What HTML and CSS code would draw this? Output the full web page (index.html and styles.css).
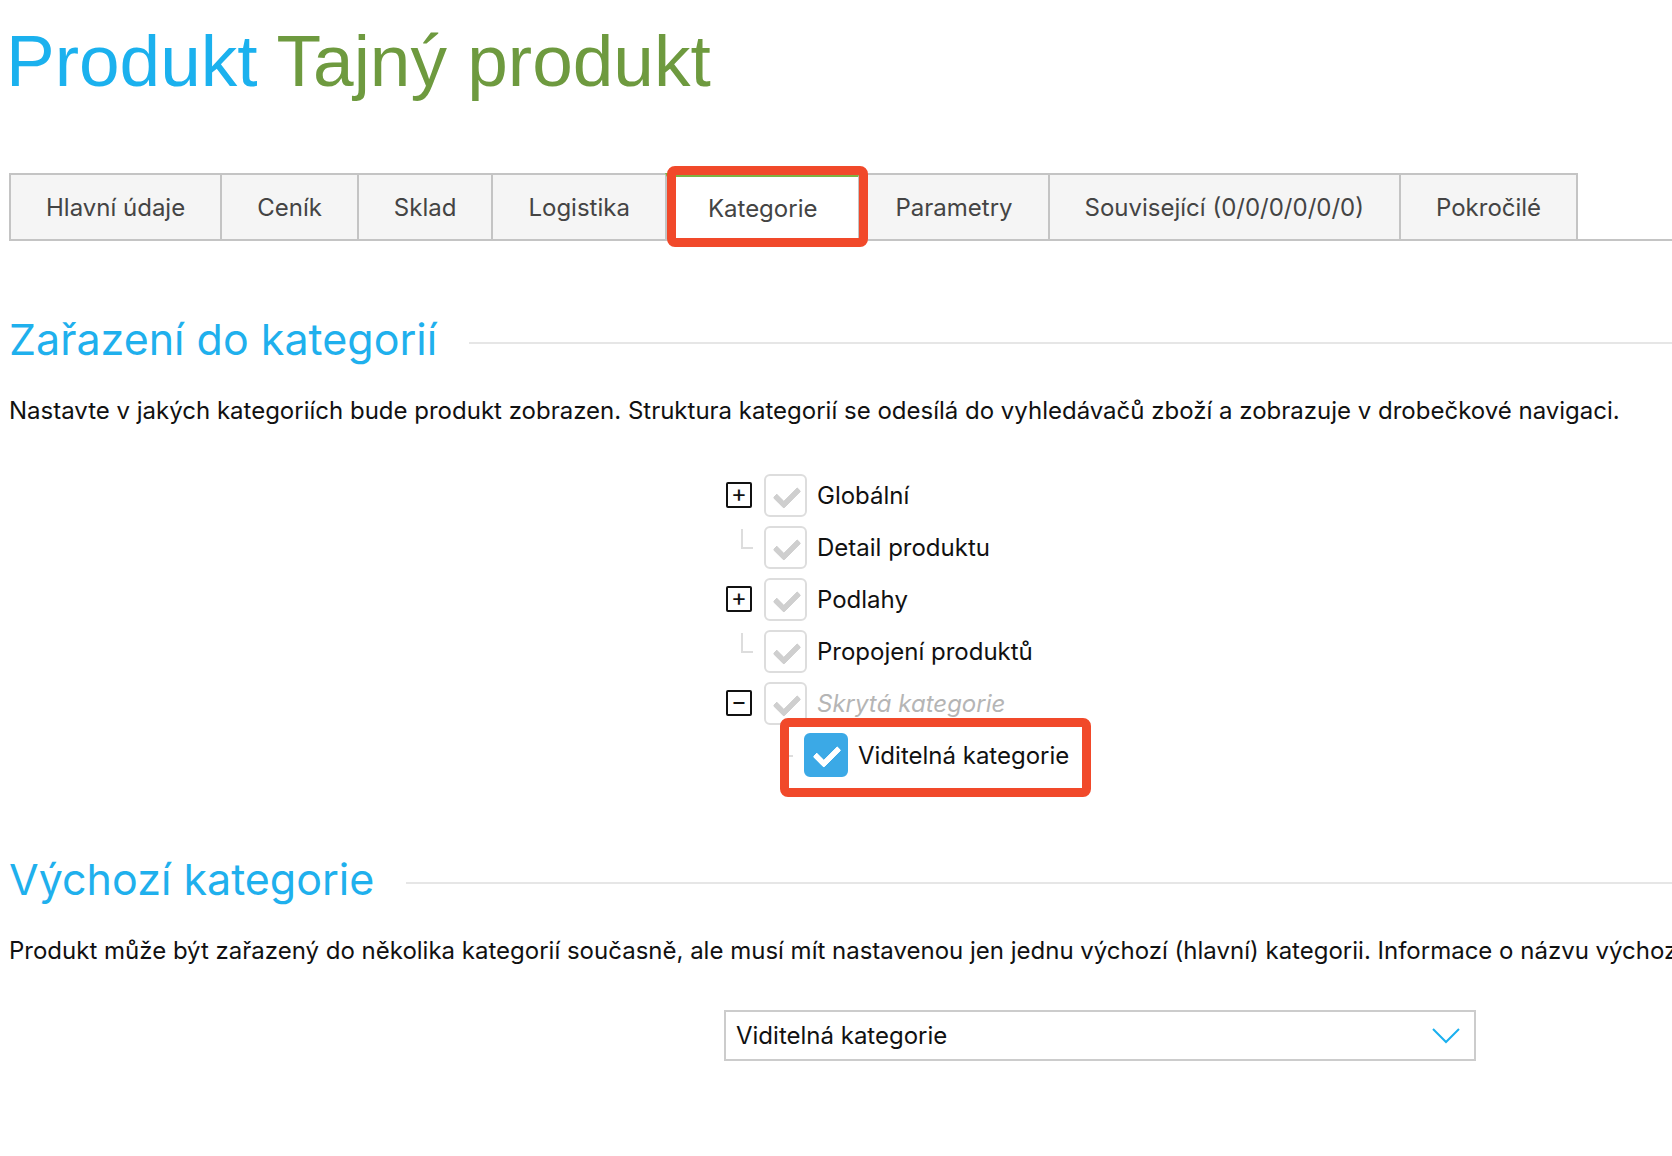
FILE: index.html
```html
<!DOCTYPE html>
<html lang="cs">
<head>
    <meta charset="UTF-8">
    <meta name="viewport" content="width=device-width, initial-scale=1.0">
    <title>Produkt Tajný produkt</title>
    <link rel="stylesheet" href="styles.css">
</head>
<body>
    <h1 class="page-title">Produkt <span class="product-name">Tajný produkt</span></h1>

    <nav class="tabs">
        <a class="tab">Hlavní údaje</a>
        <a class="tab">Ceník</a>
        <a class="tab">Sklad</a>
        <a class="tab">Logistika</a>
        <a class="tab active">Kategorie</a>
        <a class="tab">Parametry</a>
        <a class="tab">Související (0/0/0/0/0/0)</a>
        <a class="tab">Pokročilé</a>
    </nav>

    <h2 class="section-title"><span>Zařazení do kategorií</span></h2>
    <p class="hint">Nastavte v jakých kategoriích bude produkt zobrazen. Struktura kategorií se odesílá do vyhledávačů zboží a zobrazuje v drobečkové navigaci.</p>

    <div class="form-row">
        <ul class="tree">
            <li class="node">
                <span class="toggle"><span class="expander">+</span></span>
                <span class="check"></span>
                <span class="label">Globální</span>
            </li>
            <li class="node">
                <span class="toggle"><span class="branch"></span></span>
                <span class="check"></span>
                <span class="label">Detail produktu</span>
            </li>
            <li class="node">
                <span class="toggle"><span class="expander">+</span></span>
                <span class="check"></span>
                <span class="label">Podlahy</span>
            </li>
            <li class="node">
                <span class="toggle"><span class="branch"></span></span>
                <span class="check"></span>
                <span class="label">Propojení produktů</span>
            </li>
            <li class="node">
                <span class="toggle"><span class="expander">&minus;</span></span>
                <span class="check"></span>
                <span class="label hidden-cat">Skrytá kategorie</span>
            </li>
            <li class="node child">
                <span class="toggle"><span class="branch"></span></span>
                <span class="picked">
                    <span class="check checked"></span>
                    <span class="label">Viditelná kategorie</span>
                </span>
            </li>
        </ul>
    </div>

    <h2 class="section-title"><span>Výchozí kategorie</span></h2>
    <p class="hint">Produkt může být zařazený do několika kategorií současně, ale musí mít nastavenou jen jednu výchozí (hlavní) kategorii. Informace o názvu výchozí kategorie se odesílá do vyhledávačů zboží.</p>

    <div class="form-row">
        <div class="select">
            <span>Viditelná kategorie</span>
            <svg class="chevron" width="28" height="16" viewBox="0 0 28 16"><polyline points="1,1 14,14 27,1" fill="none" stroke="#1ab0ef" stroke-width="2"/></svg>
        </div>
    </div>
</body>
</html>
```

FILE: styles.css
```css
html, body {
    margin: 0;
    padding: 0;
}
body {
    width: 1672px;
    height: 1156px;
    overflow: hidden;
    padding-left: 9px;
    box-sizing: border-box;
    font-family: Inter, "Noto Sans", sans-serif;
    color: #111;
    background: #fff;
}
.page-title {
    font-family: "Liberation Sans", Arial, sans-serif;
    font-weight: normal;
    font-size: 73px;
    line-height: 84px;
    margin: 0 0 0 -3px;
    padding-top: 19px;
    color: #1bb1ee;
}
.product-name {
    color: #6e9a3f;
}

/* tabs */
.tabs {
    display: flex;
    margin-top: 70px;
    border-bottom: 2px solid #c4c4c4;
}
.tab {
    position: relative;
    display: flex;
    align-items: center;
    height: 66px;
    box-sizing: border-box;
    padding: 0 35px;
    background: #f5f5f5;
    border: 2px solid #c4c4c4;
    border-bottom: none;
    margin-left: -2px;
    font-size: 24px;
    color: #444;
    white-space: nowrap;
}
.tab:first-child {
    margin-left: 0;
}
.tab.active {
    padding: 0 41px;
    background: #fff;
    border-top: 4px solid #7cb342;
    z-index: 1;
}
.tab.active::after {
    content: "";
    position: absolute;
    top: -11px;
    left: 0;
    right: -10px;
    bottom: -8px;
    border: 9px solid #f1492a;
    border-radius: 8px;
}

/* section headings */
.section-title {
    display: flex;
    align-items: center;
    margin: 71px 0 0;
    font-size: 43px;
    font-weight: normal;
    line-height: 55px;
    color: #1fb0ed;
    white-space: nowrap;
}
.section-title::after {
    content: "";
    flex: 1;
    height: 2px;
    margin: 6px 0 0 32px;
    background: #e6e6e6;
}
.hint {
    margin: 28px 0 0;
    font-size: 24px;
    line-height: 32px;
    white-space: nowrap;
}

/* category tree */
.form-row {
    padding-left: 715px;
}
.tree {
    list-style: none;
    margin: 42px 0 0;
    padding: 0 0 0 2px;
}
.node {
    display: flex;
    align-items: center;
    height: 52px;
}
.node.child {
    padding-left: 40px;
}
.toggle {
    width: 27px;
    height: 52px;
    flex-shrink: 0;
    display: flex;
    align-items: center;
    margin-right: 11px;
}
.expander {
    width: 26px;
    height: 26px;
    box-sizing: border-box;
    border: 2px solid #111;
    border-radius: 2px;
    display: flex;
    align-items: center;
    justify-content: center;
    font-size: 24px;
    line-height: 1;
    padding-bottom: 2px;
}
.branch {
    align-self: flex-start;
    width: 15px;
    height: 18px;
    margin: 8px 0 0 15px;
    border-left: 2px solid #ddd;
    border-bottom: 2px solid #ddd;
}
.check {
    position: relative;
    width: 43px;
    height: 43px;
    box-sizing: border-box;
    flex-shrink: 0;
    border: 2px solid #ddd;
    border-radius: 6px;
    margin-right: 10px;
}
.check::after {
    content: "";
    position: absolute;
    left: 13px;
    top: 6px;
    width: 10px;
    height: 19px;
    border-right: 6px solid #cfcfcf;
    border-bottom: 6px solid #cfcfcf;
    border-radius: 2px;
    transform: rotate(45deg);
}
.check.checked {
    width: 44px;
    height: 44px;
    background: #3ba9e6;
    border-color: #3ba9e6;
}
.check.checked::after {
    border-color: #fff;
}
.label {
    font-size: 24px;
    white-space: nowrap;
}
.hidden-cat {
    font-style: italic;
    color: #b5b5b5;
}
.picked {
    position: relative;
    display: flex;
    align-items: center;
}
.picked::after {
    content: "";
    position: absolute;
    top: -15px;
    left: -24px;
    right: -22px;
    bottom: -20px;
    border: 9px solid #f1492a;
    border-radius: 8px;
}

/* default category select */
.select {
    display: flex;
    align-items: center;
    justify-content: space-between;
    width: 752px;
    height: 51px;
    box-sizing: border-box;
    margin-top: 43px;
    padding: 0 14px 0 10px;
    border: 2px solid #ccc;
    font-size: 24px;
}
```
